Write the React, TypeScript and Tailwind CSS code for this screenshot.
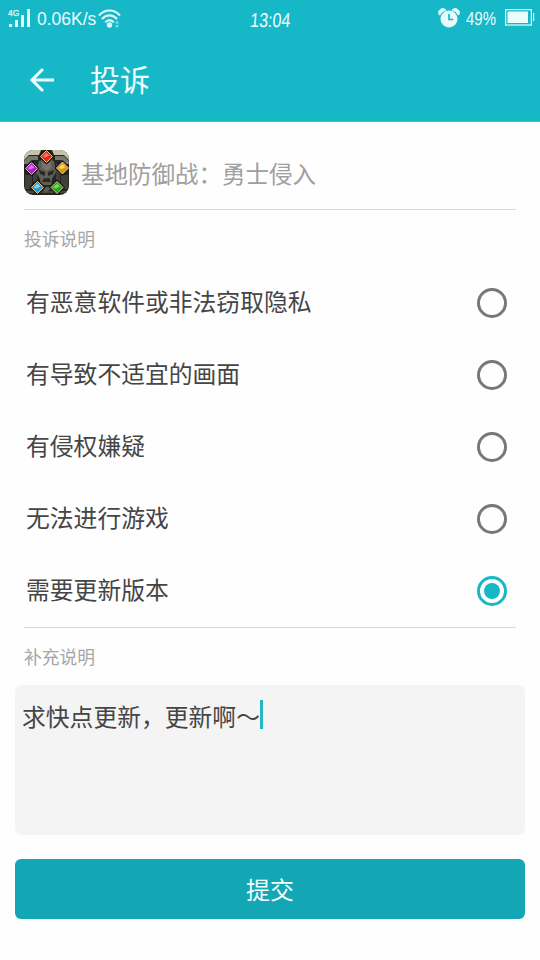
import { useState } from "react";

const reasons = [
  "有恶意软件或非法窃取隐私",
  "有导致不适宜的画面",
  "有侵权嫌疑",
  "无法进行游戏",
  "需要更新版本",
];

function SignalIcon() {
  return (
    <svg width="24" height="21" viewBox="0 0 24 21" className="shrink-0 overflow-visible" fill="#e4fbfc">
      <text x="0" y="7" fontSize="8.500" fontFamily="Liberation Sans, sans-serif" stroke="#e4fbfc" strokeWidth=".25">4G</text>
      <rect x="1" y="15" width="3.2" height="3" />
      <rect x="7" y="11" width="3" height="7" />
      <rect x="13" y="6" width="3" height="12" />
      <rect x="19" y="0" width="3" height="18" />
    </svg>
  );
}

function WifiIcon() {
  return (
    <svg width="24" height="20" viewBox="0 0 24 20" className="shrink-0" fill="none" stroke="#dcfafb" strokeWidth="2.200">
      <path d="M1 6.500C7-.2 16-.2 22 6.500M4 10C8.500 5.200 14.500 5.200 19 10M7.200 13.200C10 10.400 13 10.400 15.800 13.200" />
      <circle cx="11.500" cy="16" r="2.700" fill="#dcfafb" stroke="none" />
      <path d="m17 14.500 2-3 2 3ZM17 16l2 3 2-3Z" fill="#83dfe5" stroke="none" />
    </svg>
  );
}

function AlarmIcon() {
  return (
    <svg width="22" height="20" viewBox="0 0 22 20" className="shrink-0" fill="#e8fbfc">
      <path d="M1 6.500A4.200 4.200 0 0 1 8 2Q3.500 3 1.800 7ZM21 6.500A4.200 4.200 0 0 0 14 2Q18.500 3 20.200 7Z" stroke="#e8fbfc" strokeWidth="1" />
      <circle cx="11" cy="11" r="8.500" />
      <path d="M11 6v5.500h4.200" fill="none" stroke="#16b8c8" strokeWidth="1.700" />
    </svg>
  );
}

function BatteryIcon() {
  return (
    <svg width="30" height="18" viewBox="0 0 30 18" className="shrink-0" fill="#eafbfc">
      <rect x=".6" y="1.600" width="25.800" height="15.400" fill="none" stroke="#eafbfc" strokeWidth="1.200" />
      <rect x="2.500" y="3.500" width="20.500" height="11.500" />
      <rect x="28" y="5" width="1.200" height="8" />
    </svg>
  );
}

function GameIcon() {
  const gem = "M0-6 6 0 0 6-6 0Z";
  const gems = [
    { x: 22.500, y: 6.500, fill: "#e3251c", light: "#ff705b" },
    { x: 7.500, y: 18.500, fill: "#aa25bf", light: "#db72e4" },
    { x: 38.500, y: 18, fill: "#db9a0b", light: "#ffd65b" },
    { x: 13.500, y: 37.500, fill: "#209ed5", light: "#7fd6f5" },
    { x: 33, y: 37.500, fill: "#25a51c", light: "#76dc50" },
  ];
  return (
    <svg width="45" height="45" viewBox="0 0 45 45" className="shrink-0 rounded-[9px]">
      <rect width="45" height="45" fill="#252522" />
      <path d="M0 0h17l-2 5H5L0 10ZM28 0h17v10l-5-5H30Z" fill="#c9c2aa" />
      <path d="M0 11 5 6h9v4H8l-4 4H0ZM45 11l-5-5h-9v4h6l4 4h4Z" fill="#79766a" />
      <path d="M9 14h4v18H9ZM32 14h4v18h-4ZM1 25h7v14H1ZM37 25h7v14h-7Z" fill="#403f3a" />
      <path d="m15 11 7-2 8 2 2 11-4 7-1 10-5 3-5-3-1-10-4-7Z" fill="#5f5d54" />
      <path d="m18 12 4 2 5-2v6l-4 3-5-3Z" fill="#77756a" />
      <path d="m15 20 6 2v4l-5-2ZM30 20l-6 2v4l5-2ZM20 28h5l2 4h-9ZM17 35h11v2H17Z" fill="#292924" />
      <path d="M2 42h41M18 7v5M28 7v5M22 23v6" stroke="#6f6d60" />
      {gems.map((item) => (
        <g key={item.fill} transform={`translate(${item.x} ${item.y})`}>
          <path d={gem} fill={item.fill} stroke="#191512" strokeWidth="3" />
          <path d={gem} fill={item.fill} stroke="#ddc596" strokeWidth="1" />
          <path d="M-4 0 0-4 3-1-1 1Z" fill={item.light} />
        </g>
      ))}
    </svg>
  );
}

export default function App() {
  const [selected, setSelected] = useState(4);

  return (
    <main className="flex h-[960px] w-[540px] flex-col overflow-hidden bg-[#fefefe] font-['Noto_Sans_CJK_SC',sans-serif] text-[#454545]">
      <header className="h-[122px] shrink-0 border-b border-[#45bdc8] bg-[#16b8c8] text-[#effdfe]">
        <div className="grid h-[38px] grid-cols-3 font-['Liberation_Sans',sans-serif]">
          <div className="flex items-start pt-[9px] pl-2">
            <SignalIcon />
            <span className="ml-[5px] w-[61px] shrink-0 text-[19px] leading-[20px] whitespace-nowrap">
              <span className="inline-block origin-left scale-x-[.92]">0.06K/s</span>
            </span>
            <WifiIcon />
          </div>
          <div className="flex justify-center pt-[10px] text-[20px] leading-[20px]">
            <span className="inline-block scale-x-[.8] -skew-x-6">13:04</span>
          </div>
          <div className="flex items-start justify-end pt-[8px] pr-[5px]">
            <AlarmIcon />
            <span className="ml-[6px] w-[39px] pt-px text-[19px] leading-[20px]">
              <span className="inline-block origin-left scale-x-[.79] -skew-x-3">49%</span>
            </span>
            <BatteryIcon />
          </div>
        </div>
        <div className="flex h-[83px] items-center pb-[1px] pl-[29px]">
          <button aria-label="返回" className="flex h-8 w-[61px] items-center pt-px">
            <svg width="26" height="26" viewBox="0 0 26 26" fill="none" stroke="#effdfe" strokeWidth="3">
              <path d="M14 2 3 13l11 11M3 13h22" />
            </svg>
          </button>
          <h1 className="pb-[3px] text-[30px] leading-[40px] font-normal">投诉</h1>
        </div>
      </header>

      <div className="mx-6 flex h-[88px] shrink-0 items-center border-b border-[#d8d8d8] pt-[13px]">
        <div className="flex items-center gap-3">
          <GameIcon />
          <span className="pt-px text-[23.500px] leading-[36px] text-[#9f9f9f]">基地防御战：勇士侵入</span>
        </div>
      </div>
      <h2 className="flex h-[57px] shrink-0 items-center pl-6 text-[17.800px] font-normal text-[#a6a6a6]">投诉说明</h2>

      <div className="flex shrink-0 flex-col" role="radiogroup">
        {reasons.map((reason, index) => (
          <button
            key={reason}
            role="radio"
            aria-checked={selected === index}
            onClick={() => setSelected(index)}
            className="flex h-[72px] items-center justify-between pr-[33px] pl-[26px] text-left"
          >
            <span className="pb-[5px] text-[23.800px] leading-[36px]">{reason}</span>
            <span className={selected === index ? "flex size-[30px] items-center justify-center rounded-full border-3 border-[#16b8c8]" : "size-[30px] rounded-full border-3 border-[#777]"}>
              {selected === index && <span className="size-[16px] rounded-full bg-[#16b8c8]" />}
            </span>
          </button>
        ))}
      </div>

      <div className="mx-6 h-px shrink-0 bg-[#d8d8d8]" />
      <h2 className="flex h-[57px] shrink-0 items-center pl-6 text-[17.800px] font-normal text-[#a6a6a6]">补充说明</h2>
      <div className="mx-[15px] flex h-[150px] shrink-0 items-start rounded-[6px] bg-[#f4f4f4] pt-[13px] pl-[7px]">
        <span className="text-[23.800px] leading-[36px]">求快点更新，更新啊～</span>
        <span className="mt-[2px] h-[29px] w-[3px] bg-[#26b7c5]" />
      </div>
      <button className="mx-[15px] mt-6 h-[60px] shrink-0 rounded-[6px] bg-[#13a7b5] text-[24px] leading-[36px] text-[#f3ffff]">
        提交
      </button>
    </main>
  );
}
